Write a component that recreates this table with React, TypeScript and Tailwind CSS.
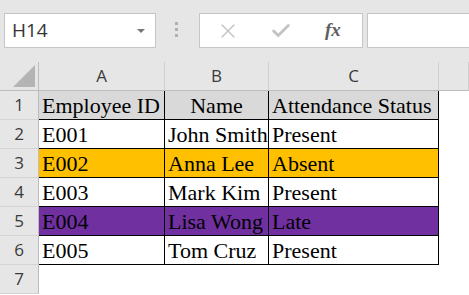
import { X, Check } from 'lucide-react';

type Row = { id: string; name: string; status: string; bg: string };

const rows: Row[] = [
    { id: 'E001', name: 'John Smith', status: 'Present', bg: 'bg-white' },
    { id: 'E002', name: 'Anna Lee', status: 'Absent', bg: 'bg-[#ffc000]' },
    { id: 'E003', name: 'Mark Kim', status: 'Present', bg: 'bg-white' },
    { id: 'E004', name: 'Lisa Wong', status: 'Late', bg: 'bg-[#7030a0]' },
    { id: 'E005', name: 'Tom Cruz', status: 'Present', bg: 'bg-white' },
];

const uiFont = { fontFamily: '"Open Sans", "Noto Sans", sans-serif' };
const cellFont = { fontFamily: '"Liberation Serif", "Times New Roman", serif' };

function RowHead({ n }: { n: number }) {
    return (
        <div
            className="flex h-[29px] items-center justify-center border-b border-r border-b-[#d4d4d4] border-r-[#bcbcbc] bg-[#e6e6e6] text-[17px] text-[#3a3a3a]"
            style={uiFont}
        >
            {n}
        </div>
    );
}

function Cell({ children, bg, center }: { children?: React.ReactNode; bg: string; center?: boolean }) {
    return (
        <div
            className={`flex h-[29px] items-end overflow-hidden whitespace-nowrap border-b border-r border-black px-[3px] pb-[2px] text-[22px] leading-none text-black ${bg} ${center ? 'justify-center' : ''}`}
            style={cellFont}
        >
            {children}
        </div>
    );
}

function FormulaBar() {
    return (
        <div className="flex h-[62px] items-start bg-[#e6e6e6] pt-[13px]">
            <div className="ml-[4px] flex h-[35px] w-[152px] items-center justify-between border border-[#c6c6c6] bg-white pl-[7px] pr-[10px]">
                <span className="text-[19px] text-[#333]" style={uiFont}>H14</span>
                <span className="h-0 w-0 border-x-[4px] border-t-[4px] border-x-transparent border-t-[#777]" />
            </div>
            <div className="ml-[19px] mt-[9px] flex flex-col gap-[3px]">
                <span className="h-[3px] w-[3px] bg-[#b0b0b0]" />
                <span className="h-[3px] w-[3px] bg-[#b0b0b0]" />
                <span className="h-[3px] w-[3px] bg-[#b0b0b0]" />
            </div>
            <div className="ml-[21px] flex h-[35px] w-[164px] items-center border border-[#c6c6c6] bg-white">
                <X className="ml-[16px] h-[24px] w-[24px] text-[#c4c4c4]" strokeWidth={1.4} />
                <Check className="ml-[30px] h-[22px] w-[22px] text-[#c4c4c4]" strokeWidth={3.2} />
                <span
                    className="ml-[33px] text-[19px] font-bold italic text-[#5f5f5f]"
                    style={cellFont}
                >
                    fx
                </span>
            </div>
            <div className="ml-[4px] h-[35px] flex-1 border border-r-0 border-[#c6c6c6] bg-white" />
        </div>
    );
}

export default function App() {
    return (
        <div className="h-[295px] w-[469px] overflow-hidden bg-white">
            <FormulaBar />
            <div className="grid grid-cols-[39px_126px_104px_170px_1fr]">
                {/* column headers */}
                <div className="relative h-[29px] border-b border-r border-b-[#bcbcbc] border-r-[#bcbcbc] bg-[#e6e6e6]">
                    <svg className="absolute bottom-[3px] right-[3px]" width="22" height="22" viewBox="0 0 22 22">
                        <polygon points="22,0 22,22 0,22" fill="#b4b4b4" />
                    </svg>
                </div>
                {['A', 'B', 'C', ''].map((c, i) => (
                    <div
                        key={i}
                        className="flex h-[29px] items-center justify-center border-b border-r border-b-[#bcbcbc] border-r-[#cfcfcf] bg-[#e6e6e6] text-[17px] text-[#3a3a3a]"
                        style={uiFont}
                    >
                        {c}
                    </div>
                ))}

                {/* header row */}
                <RowHead n={1} />
                <Cell bg="bg-[#d9d9d9]">Employee ID</Cell>
                <Cell bg="bg-[#d9d9d9]" center>Name</Cell>
                <Cell bg="bg-[#d9d9d9]">Attendance Status</Cell>
                <div className="bg-white" />

                {rows.map((r, i) => (
                    <div key={r.id} className="contents">
                        <RowHead n={i + 2} />
                        <Cell bg={r.bg}>{r.id}</Cell>
                        <Cell bg={r.bg}>{r.name}</Cell>
                        <Cell bg={r.bg}>{r.status}</Cell>
                        <div className="bg-white" />
                    </div>
                ))}

                <RowHead n={7} />
                <div className="col-span-4 bg-white" />
            </div>
        </div>
    );
}
